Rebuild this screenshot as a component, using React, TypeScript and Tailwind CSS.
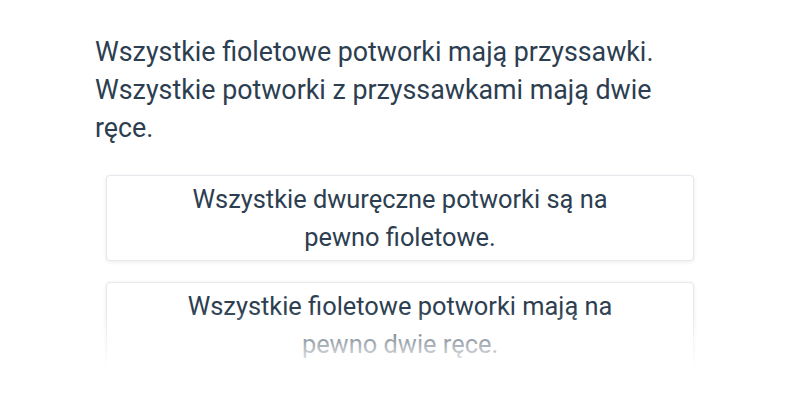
export default function App() {
  const options = [
    "Wszystkie dwuręczne potworki są na pewno fioletowe.",
    "Wszystkie fioletowe potworki mają na pewno dwie ręce.",
  ];

  return (
    <div
      className="relative h-[400px] w-[800px] overflow-hidden bg-white text-[#2c3e50]"
      style={{ fontFamily: "Roboto, 'Noto Sans', sans-serif" }}
    >
      <div className="mx-auto w-[610px] pt-[33px]">
        {/* Question */}
        <p className="text-[26.8px] leading-[38px]">
          Wszystkie fioletowe potworki mają przyssawki. Wszystkie potworki z
          przyssawkami mają dwie ręce.
        </p>

        {/* Answers */}
        <div className="mt-[28px] flex flex-col gap-[21px] px-[11px]">
          {options.map((o) => (
            <button
              key={o}
              type="button"
              className="flex justify-center rounded-[4px] border border-[#e4e7eb] bg-white py-[4px] shadow-[0_1px_4px_rgba(0,0,0,0.08)]"
            >
              <span className="w-[460px] text-center text-[25.4px] leading-[38px]">
                {o}
              </span>
            </button>
          ))}
        </div>
      </div>

      {/* Bottom fade */}
      <div className="pointer-events-none absolute inset-x-0 top-[310px] bottom-0 bg-gradient-to-b from-white/0 to-white to-[65%]" />
    </div>
  );
}
